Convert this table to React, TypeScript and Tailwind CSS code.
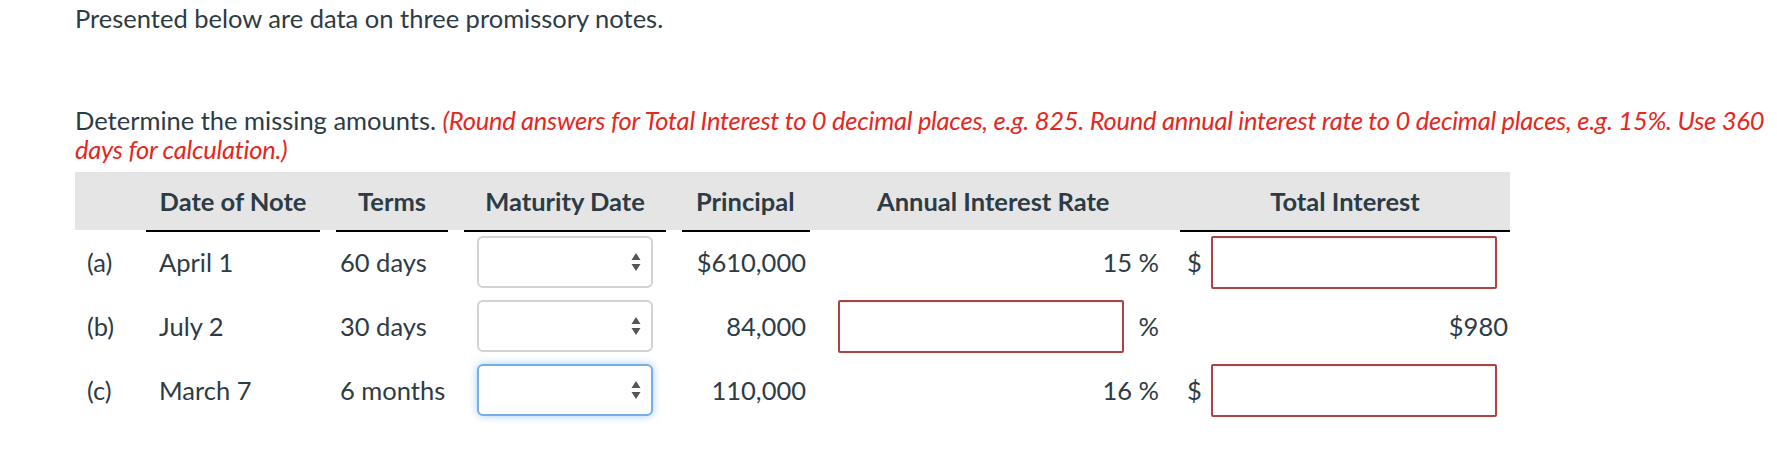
import React from "react";

const ink = "text-[#2d3b45]";

function SelectBox({ focused }: { focused?: boolean }) {
  return (
    <div
      className={
        "relative flex h-[52px] w-[176px] items-center justify-end rounded-[6px] border-2 bg-white pr-[10px] " +
        (focused
          ? "border-[#78ade6] shadow-[0_0_8px_rgba(102,175,233,0.6)]"
          : "border-[#d2d2d2]")
      }
    >
      <svg width="10" height="20" viewBox="0 0 10 20" className="fill-[#555555]">
        <polygon points="5,1 9.5,8 0.5,8" />
        <polygon points="0.5,12 9.5,12 5,19" />
      </svg>
    </div>
  );
}

function AnswerInput() {
  return (
    <div className="h-[53px] w-[286px] rounded-[2px] border-2 border-[#a94442] bg-white shadow-[inset_0_1px_1px_rgba(0,0,0,0.075)]" />
  );
}

type Row = {
  label: string;
  date: string;
  terms: string;
  principal: string;
  rate: string | null;
  interest: string | null;
  focused?: boolean;
};

const rows: Row[] = [
  { label: "(a)", date: "April 1", terms: "60 days", principal: "$610,000", rate: "15", interest: null },
  { label: "(b)", date: "July 2", terms: "30 days", principal: "84,000", rate: null, interest: "$980" },
  { label: "(c)", date: "March 7", terms: "6 months", principal: "110,000", rate: "16", interest: null, focused: true },
];

const cols = "grid grid-cols-[71px_190px_128px_218px_148px_350px_330px]";

function HeadCell({
  line,
  children,
  className,
}: {
  line?: string;
  children?: React.ReactNode;
  className?: string;
}) {
  return (
    <div className="flex flex-col">
      <div className={"flex h-[58px] items-center bg-[#e5e5e5] " + (className ?? "")}>{children}</div>
      <div className="h-[2px]">{line && <div className={"h-[2px] bg-black " + line} />}</div>
    </div>
  );
}

export default function App() {
  return (
    <main
      className={"min-h-screen bg-white pl-[75px] pt-[4px] text-[25.5px] leading-[29px] " + ink}
      style={{ fontFamily: "Lato, 'Liberation Sans', sans-serif" }}
    >
      <p className="whitespace-nowrap">Presented below are data on three promissory notes.</p>

      <p className="mt-[73px] whitespace-nowrap">
        Determine the missing amounts.{" "}
        <span className="italic tracking-[-0.26px] text-[#e4281e]">
          (Round answers for Total Interest to 0 decimal places, e.g. 825. Round annual interest rate to 0
          decimal places, e.g. 15%. Use 360
          <br />
          days for calculation.)
        </span>
      </p>

      <div className="mt-[8px] w-[1435px]">
        <div className={cols + " font-bold"}>
          <HeadCell />
          <HeadCell line="w-[174px]" className="justify-center pr-[16px]">
            Date of Note
          </HeadCell>
          <HeadCell line="w-[112px]" className="justify-center pr-[16px]">
            Terms
          </HeadCell>
          <HeadCell line="w-[202px]" className="justify-center pr-[16px]">
            Maturity Date
          </HeadCell>
          <HeadCell line="w-[128px]" className="pl-[14px]">
            Principal
          </HeadCell>
          <HeadCell className="pl-[47px]">Annual Interest Rate</HeadCell>
          <HeadCell line="w-full" className="justify-center">
            Total Interest
          </HeadCell>
        </div>

        <div className="-mt-[2px]">
          {rows.map((r) => (
            <div key={r.label} className={cols + " h-[64px] items-center"}>
              <div className="pl-[12px]">{r.label}</div>
              <div className="pl-[13px]">{r.date}</div>
              <div className="pl-[4px]">{r.terms}</div>
              <div className="pl-[13px]">
                <SelectBox focused={r.focused} />
              </div>
              <div className="pr-[24px] text-right">{r.principal}</div>
              <div className="flex items-center justify-end pr-[21px]">
                {r.rate ? (
                  <span>{r.rate} %</span>
                ) : (
                  <>
                    <div className="mr-auto ml-[8px]">
                      <AnswerInput />
                    </div>
                    <span>%</span>
                  </>
                )}
              </div>
              <div className="flex items-center">
                {r.interest ? (
                  <span className="ml-auto pr-[2px]">{r.interest}</span>
                ) : (
                  <>
                    <span className="ml-[7px] mr-[9px]">$</span>
                    <AnswerInput />
                  </>
                )}
              </div>
            </div>
          ))}
        </div>
      </div>
    </main>
  );
}
